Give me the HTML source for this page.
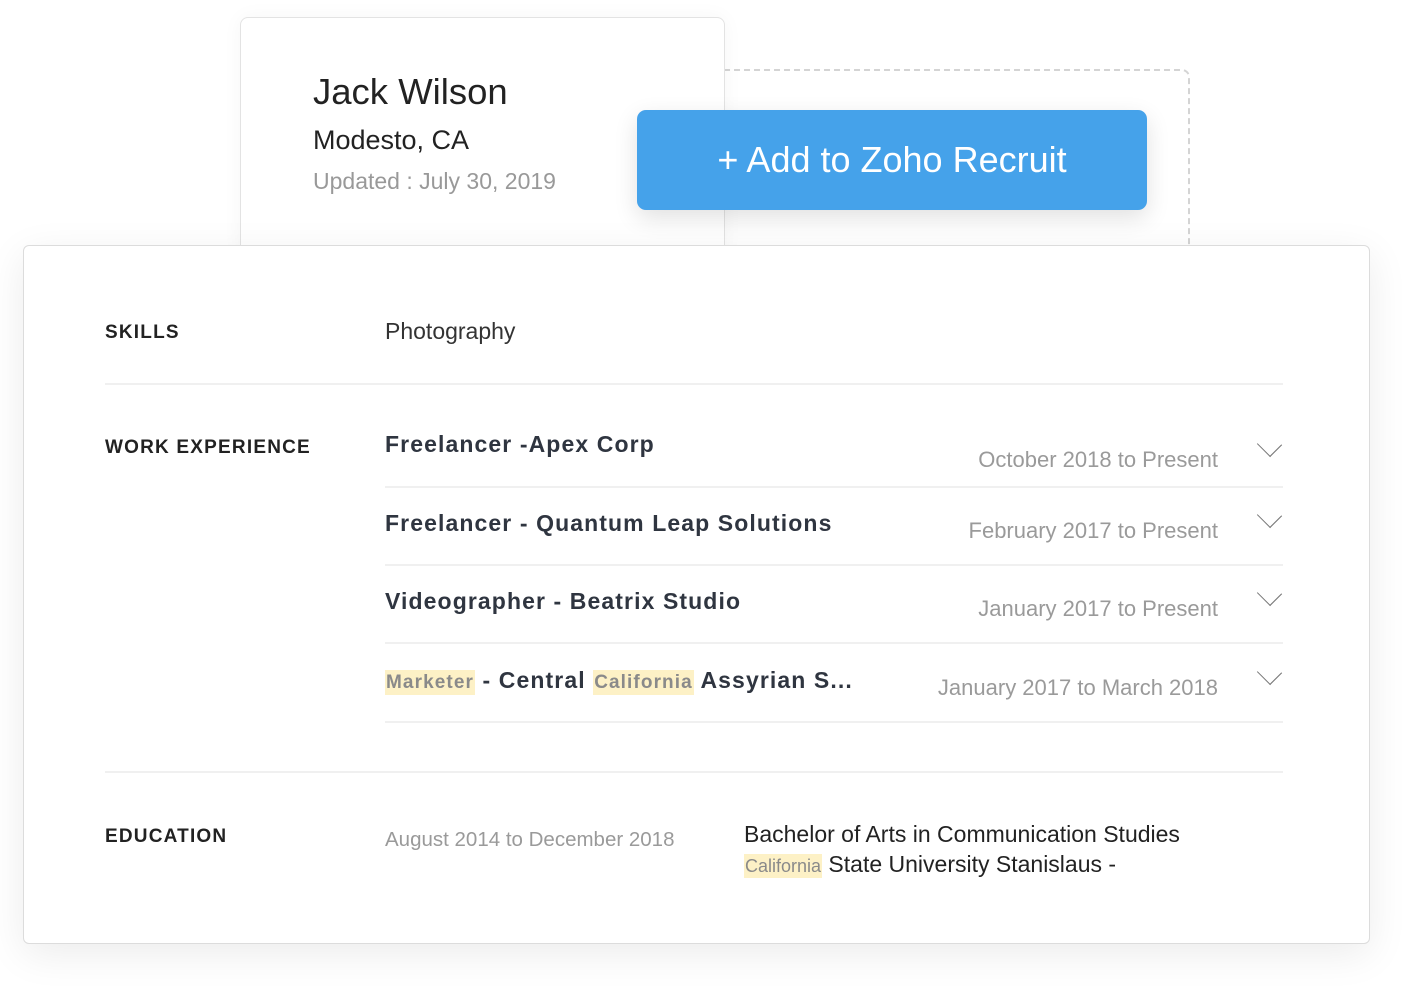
<!DOCTYPE html>
<html><head><style>
body{margin:0;width:1420px;height:1001px;background:#fff;font-family:"Liberation Sans",sans-serif;position:relative;overflow:hidden}
.a{position:absolute;white-space:nowrap}
.top{left:240px;top:17px;width:483px;height:240px;border:1px solid #e3e3e3;border-radius:8px;background:#fff;box-shadow:0 0 20px rgba(0,0,0,.04)}
.dash{left:724px;top:69px;width:464px;height:190px;border:2px dashed #d4d4d4;border-left:none;border-radius:0 8px 0 0}
.btn{left:637px;top:110px;width:510px;height:100px;background:#45a2ea;border-radius:9px;color:#fff;font-size:36px;text-align:center;line-height:100px;box-shadow:0 8px 24px rgba(0,0,0,.12)}
.card{left:23px;top:245px;width:1345px;height:697px;border:1px solid #dcdcdc;border-radius:6px;background:#fff;box-shadow:0 10px 40px rgba(0,0,0,.08)}
.lbl{font-size:19px;font-weight:bold;color:#222;letter-spacing:1.2px}
.t{font-size:23px;font-weight:bold;color:#2f3540;letter-spacing:1.1px}
.d{font-size:22px;color:#9a9a9a;text-align:right;width:400px}
.hl{background:#fdf1c6;color:#8a8a8a;font-size:19px;padding:2px 1px}
.ln{height:2px;background:#f0f0f0}
.ch{width:16px;height:16px;border-right:1.5px solid #777;border-bottom:1.5px solid #777;transform:rotate(45deg) scaleX(1.1)}
</style></head><body>
<div class="a dash"></div>
<div class="a top"></div>
<div class="a" style="left:313px;top:71px;font-size:36.5px;color:#222">Jack Wilson</div>
<div class="a" style="left:313px;top:125px;font-size:27px;color:#222">Modesto, CA</div>
<div class="a" style="left:313px;top:168px;font-size:23px;color:#999">Updated : July 30, 2019</div>
<div class="a btn">+ Add to Zoho Recruit</div>
<div class="a card"></div>
<div class="a lbl" style="left:105px;top:322px">SKILLS</div>
<div class="a" style="left:385px;top:318px;font-size:23px;color:#333">Photography</div>
<div class="a ln" style="left:105px;top:383px;width:1178px"></div>
<div class="a lbl" style="left:105px;top:437px">WORK EXPERIENCE</div>

<div class="a t" style="left:385px;top:431px">Freelancer -Apex Corp</div>
<div class="a d" style="left:818px;top:447px">October 2018 to Present</div>
<div class="a ch" style="left:1261px;top:436px"></div>
<div class="a ln" style="left:385px;top:486px;width:898px"></div>

<div class="a t" style="left:385px;top:510px">Freelancer - Quantum Leap Solutions</div>
<div class="a d" style="left:818px;top:518px">February 2017 to Present</div>
<div class="a ch" style="left:1261px;top:507px"></div>
<div class="a ln" style="left:385px;top:564px;width:898px"></div>

<div class="a t" style="left:385px;top:588px">Videographer - Beatrix Studio</div>
<div class="a d" style="left:818px;top:596px">January 2017 to Present</div>
<div class="a ch" style="left:1261px;top:585px"></div>
<div class="a ln" style="left:385px;top:642px;width:898px"></div>

<div class="a t" style="left:385px;top:667px"><span class="hl">Marketer</span> - Central <span class="hl">California</span> Assyrian S...</div>
<div class="a d" style="left:818px;top:675px">January 2017 to March 2018</div>
<div class="a ch" style="left:1261px;top:664px"></div>
<div class="a ln" style="left:385px;top:721px;width:898px"></div>

<div class="a ln" style="left:105px;top:771px;width:1178px"></div>
<div class="a lbl" style="left:105px;top:826px">EDUCATION</div>
<div class="a" style="left:385px;top:828px;font-size:20.5px;color:#9a9a9a">August 2014 to December 2018</div>
<div class="a" style="left:744px;top:821px;font-size:23px;color:#222">Bachelor of Arts in Communication Studies</div>
<div class="a" style="left:744px;top:851px;font-size:23px;color:#222"><span class="hl" style="font-size:18px">California</span> State University Stanislaus -</div>
</body></html>
